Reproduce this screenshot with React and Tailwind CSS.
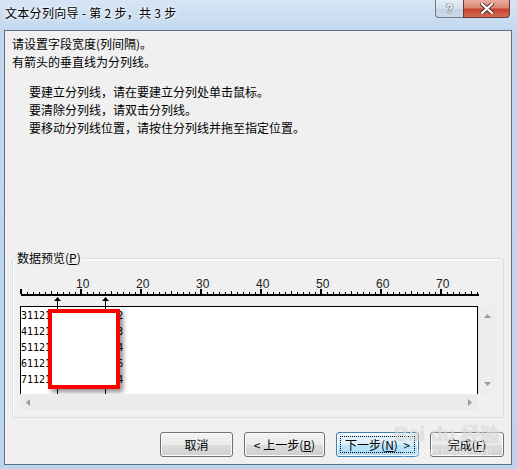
const CJK = { fontFamily: '"Noto Sans CJK SC", "Liberation Sans", sans-serif' }

const rows = ['31121010010060202', '41121020020050103', '51121030030040204', '61121040040030306', '71121050050020404']

function Ruler() {
  const ticks = []
  for (let i = 0; i <= 76; i++) {
    const x = 8 + 6 * i
    if (i % 10 === 0) ticks.push(<rect key={i} x={x - 1} y={23} width={2} height={5} fill="#000" />)
    else if (i % 5 === 0) ticks.push(<rect key={i} x={x} y={25} width={1} height={3} fill="#000" />)
    else ticks.push(<rect key={i} x={x} y={26} width={1} height={2} fill="#000" />)
  }
  const labels = [10, 20, 30, 40, 50, 60, 70]
  return (
    <svg width="470" height="40" className="block">
      {ticks}
      <rect x={8} y={28} width={458} height={2} fill="#000" />
      {labels.map((n) => (
        <text key={n} x={8 + 6 * n - 5} y={22} fontSize="12" fill="#1c1c1c" fontFamily="Liberation Sans, sans-serif">
          {n}
        </text>
      ))}
      {[44, 92].map((x) => (
        <g key={x}>
          <polygon points={`${x + 0.5},31 ${x + 4},35 ${x - 3},35`} fill="#000" />
          <rect x={x} y={34} width={1} height={6} fill="#000" />
        </g>
      ))}
    </svg>
  )
}

function Button({ children, w, focus }) {
  return (
    <button
      className={
        focus
          ? 'relative h-[25px] rounded-[3px] border border-[#3c7fb1] bg-[linear-gradient(to_bottom,#eaf6fd_0%,#d9f0fc_50%,#bee6fd_51%,#a7d9f5_100%)] text-[12px] text-black shadow-[inset_0_0_0_1px_#fcfcfc]'
          : 'relative h-[25px] rounded-[3px] border border-[#707070] bg-[linear-gradient(to_bottom,#f2f2f2_0%,#ebebeb_50%,#dddddd_51%,#cfcfcf_100%)] text-[12px] text-black shadow-[inset_0_0_0_1px_#fcfcfc]'
      }
      style={{ width: w, ...CJK }}
    >
      {focus && <span className="absolute inset-[3px] border border-dotted border-black" />}
      {children}
    </button>
  )
}

export default function App() {
  return (
    <div className="relative h-[469px] w-[517px] overflow-hidden bg-[linear-gradient(to_bottom,#d6e5f6,#c3d8ef_30px,#bed4ed)]" style={CJK}>
      {/* title bar */}
      <div className="flex h-[30px] items-start justify-between pl-[5px] pr-[7px]">
        <div className="mt-[5px] text-[12px] leading-[16px] tracking-[0.3px] text-black [text-shadow:0_0_6px_#fff,0_0_3px_#fff]">
          文本分列向导 - 第 2 步，共 3 步
        </div>
        <div className="flex">
          <div className="flex h-[18px] w-[28px] items-center justify-center rounded-bl-[4px] border border-r-0 border-t-0 border-[#6b7a8c] bg-[linear-gradient(to_bottom,#e6eef7,#d3dfec_50%,#c2d1e2_51%,#cddaea)]">
            <span className="text-[13px] font-bold leading-none text-white [text-shadow:0_0_1px_#404a58,0_0_1px_#404a58,0_0_1px_#404a58]" style={{ fontFamily: 'Liberation Sans, sans-serif' }}>
              ?
            </span>
          </div>
          <div className="flex h-[18px] w-[47px] items-center justify-center rounded-br-[4px] border border-t-0 border-[#6b3a33] bg-[linear-gradient(to_bottom,#e9ad9d,#d98873_45%,#c6432f_55%,#d56b53)]">
            <svg width="14" height="11" viewBox="0 0 14 11">
              <path d="M2 1 L12 10 M12 1 L2 10" stroke="#5a2a24" strokeWidth="4" strokeLinecap="square" />
              <path d="M2 1 L12 10 M12 1 L2 10" stroke="#fff" strokeWidth="2.2" strokeLinecap="square" />
            </svg>
          </div>
        </div>
      </div>

      {/* client area */}
      <div className="ml-[4px] flex h-[435px] w-[508px] flex-col border border-[#5f6f82] bg-[#f0f0f0] text-black">
        <div className="h-[219px] pl-[7px] pt-[4px] text-[12px] leading-[18px]">
          <div>请设置字段宽度(列间隔)。</div>
          <div>有箭头的垂直线为分列线。</div>
          <div className="mt-[12px] pl-[17px]">
            <div>要建立分列线，请在要建立分列处单击鼠标。</div>
            <div>要清除分列线，请双击分列线。</div>
            <div>要移动分列线位置，请按住分列线并拖至指定位置。</div>
          </div>
        </div>

        <fieldset className="ml-[7px] h-[168px] w-[492px] rounded-[3px] border border-[#d5dfe5] shadow-[inset_1px_1px_0_#fff]">
          <legend className="ml-[3px] px-[1px] text-[12px] leading-[16px]">
            数据预览(<span className="underline">P</span>)
          </legend>
          <Ruler />
          <div className="ml-[7px] flex flex-col">
            <div className="flex h-[88px]">
              <div className="relative w-[458px] overflow-hidden border-x border-t border-black bg-white pt-[1px]">
                {rows.map((r) => (
                  <div key={r} className="whitespace-pre text-[10px] leading-[16px] text-black" style={{ fontFamily: '"DejaVu Sans Mono", monospace' }}>
                    {r}
                  </div>
                ))}
                <div className="absolute bottom-0 left-[36px] top-0 w-px bg-black" />
                <div className="absolute bottom-0 left-[84px] top-0 w-px bg-black" />
                <div className="absolute left-[27px] top-[2px] h-[80px] w-[72px] border-[4px] border-[#ff0000] bg-white shadow-[3px_3px_5px_rgba(0,0,0,0.45)]" />
              </div>
              <div className="flex w-[17px] flex-col items-center justify-between border-l border-[#e2e2e2] bg-[#ededed] py-[8px]">
                <svg width="7" height="4"><polygon points="3.5,0 7,4 0,4" fill="#9a9a9a" /></svg>
                <svg width="7" height="4"><polygon points="0,0 7,0 3.5,4" fill="#9a9a9a" /></svg>
              </div>
            </div>
            <div className="flex h-[16px]">
              <div className="flex w-[458px] items-center justify-between bg-[#ebebeb] px-[6px]">
                <svg width="4" height="7"><polygon points="0,3.5 4,0 4,7" fill="#9a9a9a" /></svg>
                <svg width="4" height="7"><polygon points="0,0 4,3.5 0,7" fill="#9a9a9a" /></svg>
              </div>
              <div className="w-[17px] bg-[#f0f0f0]" />
            </div>
          </div>
        </fieldset>

        <div className="mt-[14px] flex justify-end gap-[11px] pr-[7px]">
          <Button w={73}>取消</Button>
          <Button w={81}>
            &lt; 上一步(<span className="underline">B</span>)
          </Button>
          <Button w={83} focus>
            下一步(<span className="underline">N</span>)&nbsp;&nbsp;&gt;
          </Button>
          <Button w={74}>
            完成(<span className="underline">F</span>)
          </Button>
        </div>
      </div>

      {/* watermark */}
      <div className="pointer-events-none absolute left-[394px] top-[424px] flex flex-col items-center leading-none text-white/50">
        <span className="text-[20px] font-bold [text-shadow:0_0_1px_rgba(120,120,120,0.4)]" style={{ fontFamily: 'Liberation Sans, sans-serif' }}>
          Bai du 经验
        </span>
        <span className="mt-[2px] text-[11px]" style={{ fontFamily: 'Liberation Sans, sans-serif' }}>
          jingyan.baidu.com
        </span>
      </div>
    </div>
  )
}
